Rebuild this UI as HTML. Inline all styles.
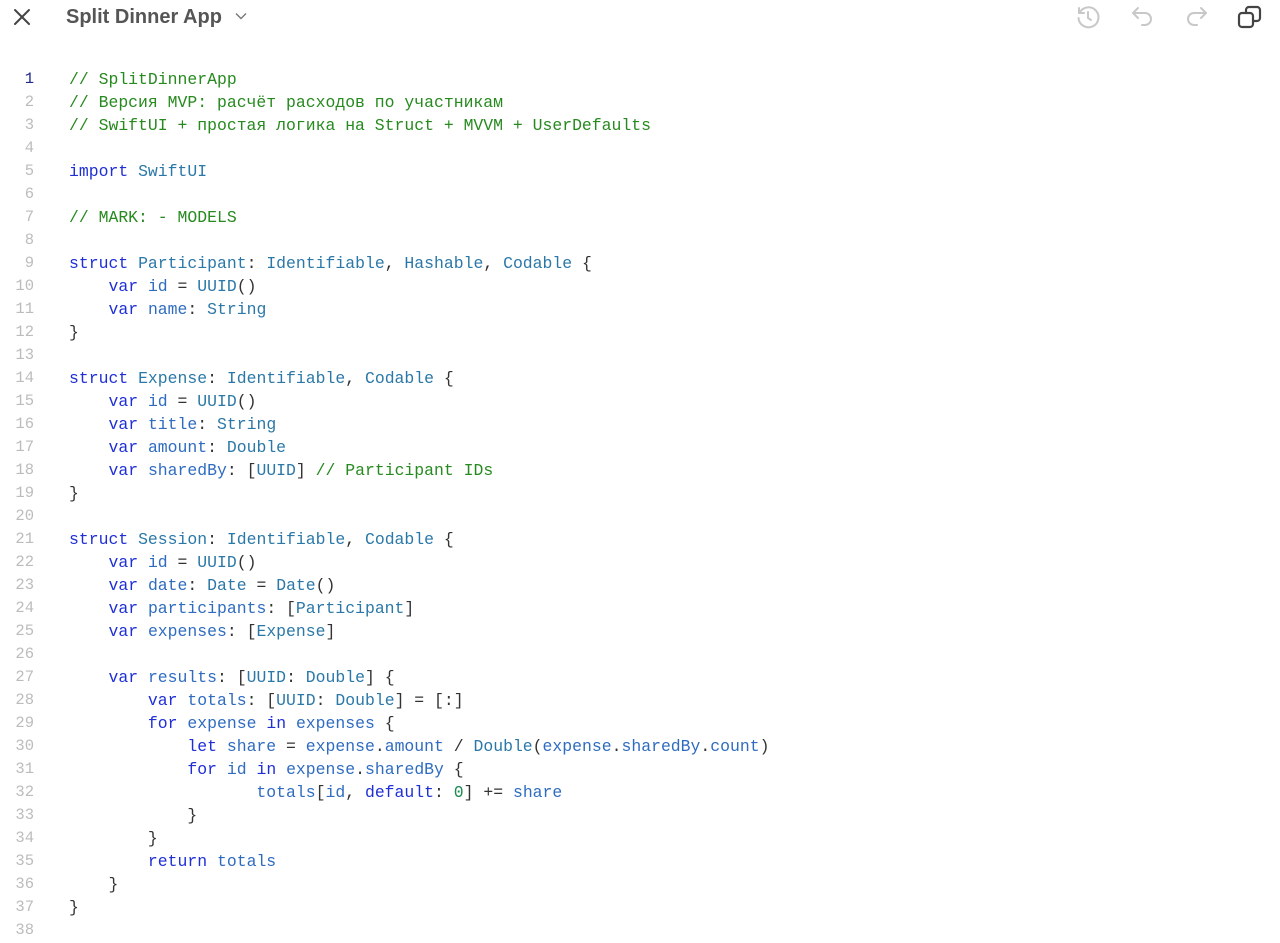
<!DOCTYPE html>
<html><head><meta charset="utf-8"><style>
body{margin:0;width:1280px;height:943px;background:#fff;overflow:hidden;font-family:"Liberation Sans",sans-serif}
.top{position:absolute;left:0;top:0;width:1280px;height:40px}
.title{position:absolute;left:66px;top:6px;font-size:20px;color:#555;font-weight:bold;letter-spacing:0px}
.code{position:absolute;left:0;top:68px;font-family:"Liberation Mono","DejaVu Sans Mono",monospace;font-size:16.45px;line-height:23px;white-space:pre;color:#333}
.code div{height:23px;overflow:visible}
.ln{display:inline-block;width:34px;text-align:right;color:#bcbcbc;margin-right:35px;font-size:15.5px;line-height:23px;vertical-align:top}
.c{color:#278a1f}.k{color:#1f2fd6}.t{color:#2b78a8}.i{color:#2f6cc0}.n{color:#1a8a50}
</style></head><body>
<div class="top">
<svg style="position:absolute;left:13px;top:8px" width="18" height="18" viewBox="0 0 18 18"><path d="M2 2L16 16M16 2L2 16" stroke="#444" stroke-width="2" stroke-linecap="round"/></svg>
<div class="title">Split Dinner App</div>
<svg style="position:absolute;left:235px;top:12px" width="12" height="8" viewBox="0 0 12 8"><path d="M1 1.5L6 6.5L11 1.5" stroke="#777" stroke-width="1.4" fill="none"/></svg>
<svg style="position:absolute;left:1075px;top:4px" width="26" height="26" viewBox="0 0 26 26" fill="none" stroke="#c8c8c8" stroke-width="2" stroke-linecap="round"><path d="M5 8A10 10 0 1 1 3.5 14"/><path d="M4 4v5h5"/><path d="M13 8v6l3 2"/></svg>
<svg style="position:absolute;left:1130px;top:5px" width="26" height="24" viewBox="0 0 26 24" fill="none" stroke="#c8c8c8" stroke-width="2" stroke-linecap="round" stroke-linejoin="round"><path d="M8 3L3 8l5 5"/><path d="M3 8h12a6 6 0 0 1 0 12h-3"/></svg>
<svg style="position:absolute;left:1183px;top:5px" width="26" height="24" viewBox="0 0 26 24" fill="none" stroke="#c8c8c8" stroke-width="2" stroke-linecap="round" stroke-linejoin="round"><path d="M18 3l5 5-5 5"/><path d="M23 8H11a6 6 0 0 0 0 12h3"/></svg>
<svg style="position:absolute;left:1237px;top:4px" width="26" height="26" viewBox="0 0 26 26" fill="none" stroke="#444" stroke-width="2.2" stroke-linejoin="round"><rect x="2" y="9" width="14" height="14" rx="3"/><path d="M9 9V6a3 3 0 0 1 3-3h8a3 3 0 0 1 3 3v8a3 3 0 0 1-3 3h-4"/></svg>
</div>
<div class="code"><div><span class="ln" style="color:#1d2a8a">1</span><span class="c">// SplitDinnerApp</span></div><div><span class="ln">2</span><span class="c">// Версия MVP: расчёт расходов по участникам</span></div><div><span class="ln">3</span><span class="c">// SwiftUI + простая логика на Struct + MVVM + UserDefaults</span></div><div><span class="ln">4</span></div><div><span class="ln">5</span><span class="k">import</span> <span class="t">SwiftUI</span></div><div><span class="ln">6</span></div><div><span class="ln">7</span><span class="c">// MARK: - MODELS</span></div><div><span class="ln">8</span></div><div><span class="ln">9</span><span class="k">struct</span> <span class="t">Participant</span>: <span class="t">Identifiable</span>, <span class="t">Hashable</span>, <span class="t">Codable</span> {</div><div><span class="ln">10</span>    <span class="k">var</span> <span class="i">id</span> = <span class="t">UUID</span>()</div><div><span class="ln">11</span>    <span class="k">var</span> <span class="i">name</span>: <span class="t">String</span></div><div><span class="ln">12</span>}</div><div><span class="ln">13</span></div><div><span class="ln">14</span><span class="k">struct</span> <span class="t">Expense</span>: <span class="t">Identifiable</span>, <span class="t">Codable</span> {</div><div><span class="ln">15</span>    <span class="k">var</span> <span class="i">id</span> = <span class="t">UUID</span>()</div><div><span class="ln">16</span>    <span class="k">var</span> <span class="i">title</span>: <span class="t">String</span></div><div><span class="ln">17</span>    <span class="k">var</span> <span class="i">amount</span>: <span class="t">Double</span></div><div><span class="ln">18</span>    <span class="k">var</span> <span class="i">sharedBy</span>: [<span class="t">UUID</span>] <span class="c">// Participant IDs</span></div><div><span class="ln">19</span>}</div><div><span class="ln">20</span></div><div><span class="ln">21</span><span class="k">struct</span> <span class="t">Session</span>: <span class="t">Identifiable</span>, <span class="t">Codable</span> {</div><div><span class="ln">22</span>    <span class="k">var</span> <span class="i">id</span> = <span class="t">UUID</span>()</div><div><span class="ln">23</span>    <span class="k">var</span> <span class="i">date</span>: <span class="t">Date</span> = <span class="t">Date</span>()</div><div><span class="ln">24</span>    <span class="k">var</span> <span class="i">participants</span>: [<span class="t">Participant</span>]</div><div><span class="ln">25</span>    <span class="k">var</span> <span class="i">expenses</span>: [<span class="t">Expense</span>]</div><div><span class="ln">26</span></div><div><span class="ln">27</span>    <span class="k">var</span> <span class="i">results</span>: [<span class="t">UUID</span>: <span class="t">Double</span>] {</div><div><span class="ln">28</span>        <span class="k">var</span> <span class="i">totals</span>: [<span class="t">UUID</span>: <span class="t">Double</span>] = [:]</div><div><span class="ln">29</span>        <span class="k">for</span> <span class="i">expense</span> <span class="k">in</span> <span class="i">expenses</span> {</div><div><span class="ln">30</span>            <span class="k">let</span> <span class="i">share</span> = <span class="i">expense</span>.<span class="i">amount</span> / <span class="t">Double</span>(<span class="i">expense</span>.<span class="i">sharedBy</span>.<span class="i">count</span>)</div><div><span class="ln">31</span>            <span class="k">for</span> <span class="i">id</span> <span class="k">in</span> <span class="i">expense</span>.<span class="i">sharedBy</span> {</div><div><span class="ln">32</span>                   <span class="i">totals</span>[<span class="i">id</span>, <span class="k">default</span>: <span class="n">0</span>] += <span class="i">share</span></div><div><span class="ln">33</span>            }</div><div><span class="ln">34</span>        }</div><div><span class="ln">35</span>        <span class="k">return</span> <span class="i">totals</span></div><div><span class="ln">36</span>    }</div><div><span class="ln">37</span>}</div><div><span class="ln">38</span></div></div>
</body></html>
